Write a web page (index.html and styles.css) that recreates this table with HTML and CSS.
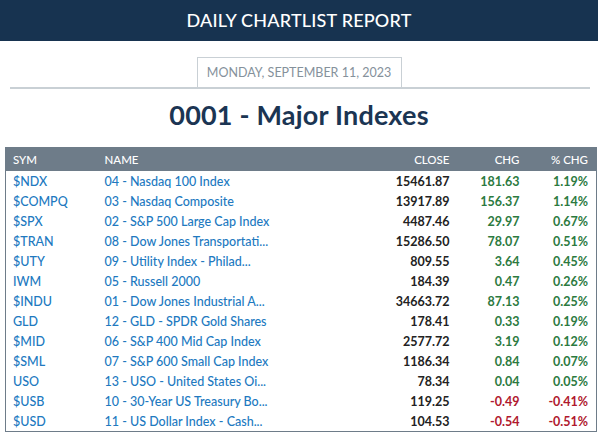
FILE: index.html
```html
<!DOCTYPE html>
<html>
<head>
<meta charset="utf-8">
<link rel="stylesheet" href="styles.css">
</head>
<body>
<header class="topbar">DAILY CHARTLIST REPORT</header>
<div class="date-wrap">
  <div class="date-box">MONDAY, SEPTEMBER 11, 2023</div>
</div>
<div class="date-rule"></div>
<h1 class="list-title">0001 - Major Indexes</h1>
<table class="report">
  <colgroup>
    <col class="c-sym"><col class="c-name"><col class="c-close"><col class="c-chg"><col class="c-pct">
  </colgroup>
  <thead>
    <tr><th>SYM</th><th>NAME</th><th class="num">CLOSE</th><th class="num">CHG</th><th class="num">% CHG</th></tr>
  </thead>
  <tbody>
    <tr><td class="sym">$NDX</td><td class="name">04 - Nasdaq 100 Index</td><td class="num close">15461.87</td><td class="num up">181.63</td><td class="num up">1.19%</td></tr>
    <tr><td class="sym">$COMPQ</td><td class="name">03 - Nasdaq Composite</td><td class="num close">13917.89</td><td class="num up">156.37</td><td class="num up">1.14%</td></tr>
    <tr><td class="sym">$SPX</td><td class="name">02 - S&amp;P 500 Large Cap Index</td><td class="num close">4487.46</td><td class="num up">29.97</td><td class="num up">0.67%</td></tr>
    <tr><td class="sym">$TRAN</td><td class="name">08 - Dow Jones Transportati...</td><td class="num close">15286.50</td><td class="num up">78.07</td><td class="num up">0.51%</td></tr>
    <tr><td class="sym">$UTY</td><td class="name">09 - Utility Index - Philad...</td><td class="num close">809.55</td><td class="num up">3.64</td><td class="num up">0.45%</td></tr>
    <tr><td class="sym">IWM</td><td class="name">05 - Russell 2000</td><td class="num close">184.39</td><td class="num up">0.47</td><td class="num up">0.26%</td></tr>
    <tr><td class="sym">$INDU</td><td class="name">01 - Dow Jones Industrial A...</td><td class="num close">34663.72</td><td class="num up">87.13</td><td class="num up">0.25%</td></tr>
    <tr><td class="sym">GLD</td><td class="name">12 - GLD - SPDR Gold Shares</td><td class="num close">178.41</td><td class="num up">0.33</td><td class="num up">0.19%</td></tr>
    <tr><td class="sym">$MID</td><td class="name">06 - S&amp;P 400 Mid Cap Index</td><td class="num close">2577.72</td><td class="num up">3.19</td><td class="num up">0.12%</td></tr>
    <tr><td class="sym">$SML</td><td class="name">07 - S&amp;P 600 Small Cap Index</td><td class="num close">1186.34</td><td class="num up">0.84</td><td class="num up">0.07%</td></tr>
    <tr><td class="sym">USO</td><td class="name">13 - USO - United States Oi...</td><td class="num close">78.34</td><td class="num up">0.04</td><td class="num up">0.05%</td></tr>
    <tr><td class="sym">$USB</td><td class="name">10 - 30-Year US Treasury Bo...</td><td class="num close">119.25</td><td class="num down">-0.49</td><td class="num down">-0.41%</td></tr>
    <tr><td class="sym">$USD</td><td class="name">11 - US Dollar Index - Cash...</td><td class="num close">104.53</td><td class="num down">-0.54</td><td class="num down">-0.51%</td></tr>
  </tbody>
</table>
</body>
</html>
```
FILE: styles.css
```css
html, body {
  margin: 0;
  padding: 0;
  background: #ffffff;
  font-family: Lato, "Open Sans", "Liberation Sans", sans-serif;
}
.topbar {
  height: 41px;
  line-height: 41px;
  background: #173350;
  color: #ffffff;
  text-align: center;
  font-size: 18px;
  font-weight: 500;
  letter-spacing: 0.2px;
}
.date-wrap {
  display: flex;
  justify-content: center;
  padding-top: 16px;
}
.date-box {
  width: 205px;
  height: 30px;
  box-sizing: border-box;
  border: 1px solid #c9d0d5;
  border-bottom: none;
  color: #85919b;
  font-size: 12.5px;
  text-align: center;
  line-height: 30px;
}
.date-rule {
  height: 2px;
  background: #c9d0d5;
  margin: 0 8px 0 10px;
}
.list-title {
  margin: 10px 0 0;
  height: 48px;
  line-height: 32px;
  text-align: center;
  color: #1b3553;
  font-size: 27px;
  font-weight: 700;
  letter-spacing: 0.2px;
}
.report {
  margin-left: 5px;
  width: 591px;
  border-collapse: collapse;
  table-layout: fixed;
  border: 1px solid #6e7c89;
  border-top: none;
  font-size: 12.5px;
}
.c-sym { width: 92px; }
.c-name { width: 259px; }
.c-close { width: 100px; }
.c-chg { width: 70px; }
.c-pct { width: 70px; }
.report th {
  background: #6e7c89;
  color: #ffffff;
  font-weight: 500;
  font-size: 11.5px;
  height: 24px;
  padding: 0 7px;
  text-align: left;
}
.report td {
  height: 20px;
  padding: 0 7px;
  white-space: nowrap;
  overflow: hidden;
}
.report .num { text-align: right; }
.report th.num:last-child, .report td.num:last-child { padding-right: 8px; }
.sym, .name { color: #2179bf; font-weight: 500; }
.close { color: #222222; font-weight: 700; }
.up { color: #2c7a3f; font-weight: 700; }
.down { color: #b0182e; font-weight: 700; }
```
